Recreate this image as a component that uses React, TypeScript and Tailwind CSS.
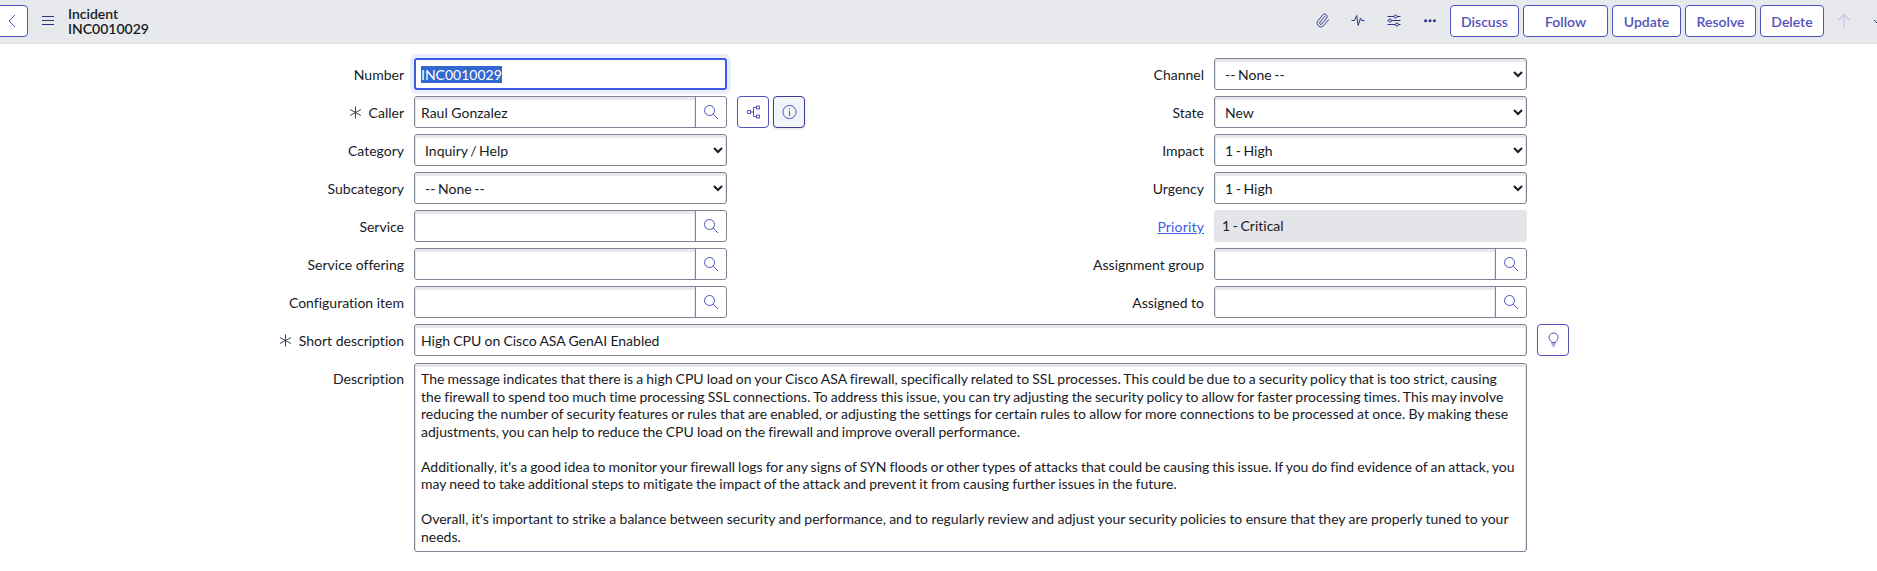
import React from "react";
import { Paperclip } from "lucide-react";

const FIELD =
  "h-8 rounded-[3px] border border-[#7d8496] bg-white shadow-[inset_0_2px_0_1px_#e6e8e9]";

function SearchIcon() {
  return (
    <svg width="16" height="16" viewBox="0 0 16 16" fill="none" stroke="#4f52bd" strokeWidth="1">
      <circle cx="6.5" cy="6.5" r="5" />
      <path d="M10.2 10.2 15 15" />
    </svg>
  );
}

function Required() {
  return (
    <svg className="mr-[7px] shrink-0" width="13" height="13" viewBox="0 0 13 13" stroke="#3c4257" strokeWidth="1">
      <path d="M6.5 0.5v12M1 3.5l11 6M12 3.5l-11 6" />
    </svg>
  );
}

function Label({ text, required, link }: { text: string; required?: boolean; link?: boolean }) {
  return (
    <div className="mr-[10px] flex h-8 flex-1 items-center justify-end whitespace-nowrap">
      {required && <Required />}
      <span className={link ? "tracking-[0.15px] text-[#3c59e7] underline" : ""}>{text}</span>
    </div>
  );
}

function Select({ value }: { value: string }) {
  return (
    <select className={FIELD + " w-[313px] pl-[6px] pr-2 pt-px [word-spacing:-1px]"} defaultValue={value}>
      <option>{value}</option>
    </select>
  );
}

function Lookup({ value = "" }: { value?: string }) {
  return (
    <div className="flex h-8 w-[313px] rounded-[3px] border border-[#7d8496] bg-white">
      <div className="flex-1 rounded-l-[2px] px-[6px] pt-px leading-[30px] shadow-[inset_0_2px_0_1px_#e6e8e9]">
        {value}
      </div>
      <div className="flex w-[31px] items-center justify-center border-l border-[#7d8496]">
        <SearchIcon />
      </div>
    </div>
  );
}

function Row({ label, required, link, children }: { label: string; required?: boolean; link?: boolean; children: React.ReactNode }) {
  return (
    <div className="flex h-8">
      <Label text={label} required={required} link={link} />
      {children}
    </div>
  );
}

function HeaderButton({ label, width }: { label: string; width: string }) {
  return (
    <button
      className={
        width +
        " flex h-8 items-center justify-center rounded-[4px] border border-[#4f52bd] bg-white pt-px text-[14px] font-semibold text-[#4f52bd]"
      }
    >
      {label}
    </button>
  );
}

const LINES = [
  { spacing: "[word-spacing:-0.52px]", text: "The message indicates that there is a high CPU load on your Cisco ASA firewall, specifically related to SSL processes. This could be due to a security policy that is too strict, causing" },
  { spacing: "[word-spacing:-0.5px]", text: "the firewall to spend too much time processing SSL connections. To address this issue, you can try adjusting the security policy to allow for faster processing times. This may involve" },
  { spacing: "[word-spacing:-0.4px]", text: "reducing the number of security features or rules that are enabled, or adjusting the settings for certain rules to allow for more connections to be processed at once. By making these" },
  { spacing: "[word-spacing:-0.49px]", text: "adjustments, you can help to reduce the CPU load on the firewall and improve overall performance." },
  { spacing: "", text: "" },
  { spacing: "[word-spacing:-0.56px]", text: "Additionally, it's a good idea to monitor your firewall logs for any signs of SYN floods or other types of attacks that could be causing this issue. If you do find evidence of an attack, you" },
  { spacing: "[word-spacing:-0.47px]", text: "may need to take additional steps to mitigate the impact of the attack and prevent it from causing further issues in the future." },
  { spacing: "", text: "" },
  { spacing: "[word-spacing:-0.24px]", text: "Overall, it's important to strike a balance between security and performance, and to regularly review and adjust your security policies to ensure that they are properly tuned to your" },
  { spacing: "", text: "needs." },
];

export default function App() {
  return (
    <div className="h-[571px] w-[1877px] overflow-hidden bg-white font-['Lato',sans-serif] text-[14px] text-[#181a1f] [font-variant-ligatures:none]">
      <header className="flex h-11 items-center overflow-hidden border-b border-[#dfe1e6] bg-[#e8e9ed]">
        <button className="-ml-1 mt-[-2px] flex h-8 w-8 shrink-0 items-center justify-center rounded-[4px] border border-[#4f52bd] bg-white">
          <svg width="16" height="16" viewBox="0 0 16 16" fill="none" stroke="#4f52bd">
            <path d="M11 2 5 8l6 6" />
          </svg>
        </button>
        <svg className="ml-[14px] mt-[-2px] shrink-0" width="12" height="9" viewBox="0 0 12 9" stroke="#2e3184">
          <path d="M0 .5h12M0 4.5h12M0 8.5h12" />
        </svg>
        <div className="ml-[14px] mt-[-2px] font-semibold leading-[15px]">
          <div>Incident</div>
          <div>INC0010029</div>
        </div>
        <div className="ml-auto mt-[-2px] flex shrink-0 items-center gap-1">
          <div className="mr-2 flex items-center gap-5 text-[#2e3184]">
            <Paperclip className="-rotate-6" size={15} strokeWidth={1.4} />
            <svg width="16" height="16" viewBox="0 0 16 16" fill="none" stroke="currentColor">
              <path d="M1.500 7.500h3L6.700 2.500l1.500 10 2.300-7.500 1 2.500H14.500" />
            </svg>
            <svg width="16" height="16" viewBox="0 0 16 16" fill="none" stroke="currentColor">
              <path d="M1.500 3.500H8M11 3.500h3.500M1.500 7.500h1M5.500 7.500h9M1.500 11.500h8M12.500 11.500h2" />
              <circle cx="9.500" cy="3.500" r="1.500" />
              <circle cx="4" cy="7.500" r="1.500" />
              <circle cx="11" cy="11.500" r="1.500" />
            </svg>
            <svg width="16" height="16" viewBox="0 0 16 16" fill="currentColor">
              <circle cx="3.600" cy="7.700" r="1.500" />
              <circle cx="8" cy="7.700" r="1.500" />
              <circle cx="12.400" cy="7.700" r="1.500" />
            </svg>
          </div>
          <HeaderButton label="Discuss" width="w-[69px]" />
          <HeaderButton label="Follow" width="w-[85px]" />
          <HeaderButton label="Update" width="w-[69px]" />
          <HeaderButton label="Resolve" width="w-[71px]" />
          <HeaderButton label="Delete" width="w-[64px]" />
          <div className="ml-2 flex w-[41px] gap-[18px]">
            <svg className="shrink-0" width="16" height="16" viewBox="0 0 16 16" fill="none" stroke="#c6c6e2" strokeWidth="1.3">
              <path d="M8 14V2M2.500 7 8 1.500 13.500 7" />
            </svg>
            <svg className="shrink-0" width="16" height="16" viewBox="0 0 16 16" fill="none" stroke="#2e3184">
              <path d="m4 7 5 5 5-5" />
            </svg>
          </div>
        </div>
      </header>

      <main className="flex flex-col gap-[6px] pt-[14px]">
        <div className="flex">
          <div className="flex w-[727px] flex-col gap-[6px]">
            <Row label="Number">
              <div className="h-8 w-[313px] rounded-[3px] border-2 border-[#3c59e7] bg-white px-[5px] pt-[6px] shadow-[0_0_0_4px_#e9edfd]">
                <div className="h-[17px] w-fit bg-[#3367d1] leading-[17px] text-white">INC0010029</div>
              </div>
            </Row>
            <Row label="Caller" required>
              <Lookup value="Raul Gonzalez" />
            </Row>
            <Row label="Category">
              <Select value="Inquiry / Help" />
            </Row>
            <Row label="Subcategory">
              <Select value="-- None --" />
            </Row>
            <Row label="Service">
              <Lookup />
            </Row>
            <Row label="Service offering">
              <Lookup />
            </Row>
            <Row label="Configuration item">
              <Lookup />
            </Row>
          </div>
          <div className="ml-[10px] mt-[38px] flex gap-1">
            <button className="flex size-8 items-center justify-center rounded-[4px] border border-[#4f52bd] bg-white">
              <svg width="16" height="16" viewBox="0 0 16 16" fill="none" stroke="#4f52bd">
                <path d="M2.500 6.500h3v3h-3zM5.500 8h3M11.500 3.500h-3v9h3M11.500 2h3v3h-3zM11.500 11h3v3h-3z" />
              </svg>
            </button>
            <button className="flex size-8 items-center justify-center rounded-[4px] border border-[#3a3d94] bg-[#f3f4fa] shadow-[0_1px_3px_#0002]">
              <svg width="16" height="16" viewBox="0 0 16 16" fill="none" stroke="#4f52bd">
                <circle cx="8.500" cy="8" r="6.600" />
                <path d="M8.500 7v5M8.500 4.300v1.200" />
              </svg>
            </button>
          </div>
          <div className="flex w-[722px] flex-col gap-[6px]">
            <Row label="Channel">
              <Select value="-- None --" />
            </Row>
            <Row label="State">
              <Select value="New" />
            </Row>
            <Row label="Impact">
              <Select value="1 - High" />
            </Row>
            <Row label="Urgency">
              <Select value="1 - High" />
            </Row>
            <Row label="Priority" link>
              <div className="w-[313px] rounded-[3px] bg-[#e4e5e9] px-2 leading-[31px] [word-spacing:-1px]">1 - Critical</div>
            </Row>
            <Row label="Assignment group">
              <Lookup />
            </Row>
            <Row label="Assigned to">
              <Lookup />
            </Row>
          </div>
        </div>

        <div className="flex w-[1569px]">
          <Label text="Short description" required />
          <div className={FIELD + " w-[1113px] px-[6px] pt-px leading-[30px] [word-spacing:-0.4px]"}>High CPU on Cisco ASA GenAI Enabled</div>
          <button className="ml-[10px] flex size-8 items-center justify-center rounded-[4px] border border-[#4f52bd] bg-white">
            <svg width="16" height="16" viewBox="0 0 16 16" fill="none" stroke="#4f52bd">
              <path d="M6.500 10.500C6.500 9 4 8 4 5.500a4.500 4.500 0 0 1 9 0C13 8 10.500 9 10.500 10.500z" />
              <path d="M6.500 12h4M7.500 14h2" strokeWidth="1.200" />
            </svg>
          </button>
        </div>

        <div className="flex w-[1527px]">
          <Label text="Description" />
          <div className="mt-px h-[189px] w-[1113px] rounded-[3px] border border-[#7d8496] bg-white px-[6px] pt-[6px] leading-[17.5px] shadow-[inset_0_2px_0_1px_#e6e8e9]">
            {LINES.map((line, i) => (
              <div key={i} className={"h-[17.5px] whitespace-nowrap " + line.spacing}>
                {line.text}
              </div>
            ))}
          </div>
        </div>
      </main>
    </div>
  );
}
